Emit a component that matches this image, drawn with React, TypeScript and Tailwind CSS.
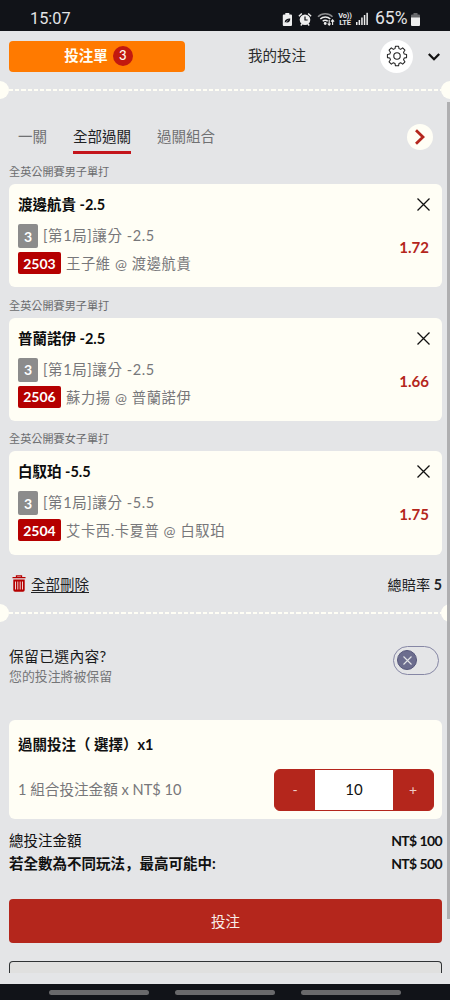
import { ReactNode } from "react";

const bets = [
  {
    league: "全英公開賽男子單打",
    pick: "渡邊航貴 -2.5",
    market: "[第1局]讓分 -2.5",
    code: "2503",
    match: "王子維 @ 渡邊航貴",
    odds: "1.72",
  },
  {
    league: "全英公開賽男子單打",
    pick: "普蘭諾伊 -2.5",
    market: "[第1局]讓分 -2.5",
    code: "2506",
    match: "蘇力揚 @ 普蘭諾伊",
    odds: "1.66",
  },
  {
    league: "全英公開賽女子單打",
    pick: "白馭珀 -5.5",
    market: "[第1局]讓分 -5.5",
    code: "2504",
    match: "艾卡西.卡夏普 @ 白馭珀",
    odds: "1.75",
  },
];

function StatusBar() {
  return (
    <div className="flex h-[31px] shrink-0 items-center bg-[#111318] pt-[7px] pl-[30px] font-['Roboto',sans-serif] text-[#e4e5e7]">
      <span className="w-[252px] text-[16.3px] leading-none">15:07</span>
      <svg width="11" height="15" viewBox="0 0 11 15">
        <path d="M3.3 1h4v1.5H9a1 1 0 0 1 1 1V13a1 1 0 0 1-1 1H1.8a1 1 0 0 1-1-1V3.500a1 1 0 0 1 1-1h1.500z" fill="#eee" />
        <path d="M2.800 10.500C2.800 7.500 5 6.500 8.300 6.500 8.200 9.500 6.500 11 4 10.200z" fill="#111318" />
        <path d="M2.500 11.500 6.300 8" stroke="#eee" strokeWidth=".5" />
      </svg>
      <svg className="ml-[5px]" width="14" height="15" viewBox="0 0 14 15">
        <circle cx="7" cy="7.800" r="5.300" fill="#eee" />
        <path d="M.9 4.200 3.800 1.500M13.100 4.200 10.200 1.500M2.800 13.500l1.300-1.600M11.200 13.500l-1.300-1.600" stroke="#eee" strokeWidth="1.500" />
        <path d="M7 4.500V8h2.600" fill="none" stroke="#111318" strokeWidth="1.200" />
      </svg>
      <svg className="ml-[5px]" width="18" height="14" viewBox="0 0 18 14" fill="none">
        <path d="M1 4.700C5 .7 11.500.7 15.500 4.700" stroke="#8b8c8e" strokeWidth="1.500" />
        <path d="M3.300 7c2.800-2.800 7.200-2.800 10 0M5.700 9.300c1.600-1.500 3.600-1.500 5 0" stroke="#eee" strokeWidth="1.500" />
        <circle cx="8.200" cy="11.500" r="1.400" fill="#eee" />
        <path d="M12.200 8v5M10.700 11.500l1.500 1.700 1.500-1.700M15.600 13V8M14.100 9.600l1.500-1.700 1.500 1.700" stroke="#eee" strokeWidth="1.100" />
      </svg>
      <span className="ml-[3px] flex w-[14px] flex-col items-center text-[7.5px] leading-[7px] font-bold tracking-[-0.2px]">
        <span>Vo))</span>
        <span>LTE</span>
      </span>
      <svg className="ml-[4px]" width="13" height="14" viewBox="0 0 13 14" fill="#eee">
        <rect x="0" y="10" width="1.500" height="3" />
        <rect x="2.600" y="8" width="1.500" height="5" />
        <rect x="5.200" y="5.500" width="1.500" height="7.500" />
        <rect x="7.800" y="3" width="1.500" height="10" />
        <rect x="10.400" y=".8" width="1.500" height="12.200" />
      </svg>
      <span className="ml-[6px] w-[36px] text-[17.500px] leading-none whitespace-nowrap">65%</span>
      <svg width="9" height="13" viewBox="0 0 9 13">
        <path d="M2.500 0h4v1.500H8a1 1 0 0 1 1 1V6H0V2.500a1 1 0 0 1 1-1h1.500z" fill="#68696c" />
        <path d="M0 4.500h9V12a1 1 0 0 1-1 1H1a1 1 0 0 1-1-1z" fill="#eee" />
      </svg>
    </div>
  );
}

function Header() {
  return (
    <div className="flex h-[50px] shrink-0 items-center pl-[9px]">
      <button className="flex h-[31px] w-[176px] items-center justify-center gap-[5px] rounded-[4px] bg-[#ff7a00] pl-[3px] text-[14.5px] font-bold text-[#fffdf3]">
        投注單
        <span className="flex size-[20px] items-center justify-center rounded-full bg-[#c2190f] text-[13px] font-medium">3</span>
      </button>
      <span className="w-[184px] text-center text-[14.5px] text-[#2a2b2c]">我的投注</span>
      <button className="ml-[11px] flex size-[33px] items-center justify-center rounded-full bg-white">
        <svg width="22" height="22" viewBox="0 0 24 24" fill="none" stroke="#222" strokeWidth="1.200" strokeLinejoin="round">
          <path d="M10.200 2h3.600l.5 2.700 1.900.8 2.300-1.600 2.600 2.600-1.600 2.300.8 1.900 2.700.5v3.600l-2.700.5-.8 1.900 1.600 2.300-2.600 2.600-2.300-1.600-1.900.8-.5 2.700h-3.600l-.5-2.700-1.900-.8-2.300 1.600-2.600-2.600 1.600-2.300-.8-1.900L1 14.800v-3.600l2.700-.5.8-1.900-1.600-2.300 2.600-2.600 2.300 1.600 1.900-.8z" transform="translate(.6 -.6) scale(.95 .97)" />
          <circle cx="12" cy="12" r="3.500" />
        </svg>
      </button>
      <svg className="mt-[2px] ml-[15px]" width="12" height="8" viewBox="0 0 12 8" fill="none" stroke="#111" strokeWidth="2.300">
        <path d="M.8 1 6 6.200 11.200 1" />
      </svg>
    </div>
  );
}

// ticket perforation between sections
function Perforation() {
  return (
    <div className="-mx-[9px] flex h-[18px] shrink-0 items-center justify-between overflow-hidden">
      <div className="size-[18px] shrink-0 rounded-full bg-[#fffef5]" />
      <div className="h-[2px] flex-1 bg-[repeating-linear-gradient(90deg,#fffef5_0_4px,transparent_4px_6.25px)]" />
      <div className="size-[18px] shrink-0 rounded-full bg-[#fffef5]" />
    </div>
  );
}

function Tabs() {
  return (
    <div className="flex h-[34px] shrink-0 items-start pl-[18px] text-[14.5px] leading-[34px] text-[#707173]">
      <span className="w-[55px]">一關</span>
      <span className="h-[34px] border-b-[3px] border-[#c4141b] text-[#202124]">全部過關</span>
      <span className="ml-[26px] w-[250px]">過關組合</span>
      <button className="mt-[4px] flex size-[26px] shrink-0 items-center justify-center rounded-full bg-[#fffef5]">
        <svg width="10" height="16" viewBox="0 0 10 16" fill="none" stroke="#b4261c" strokeWidth="2.800">
          <path d="M1 1.200 8 8 1 14.800" />
        </svg>
      </button>
    </div>
  );
}

function BetCard({ bet }: { bet: (typeof bets)[number] }) {
  return (
    <div className="mb-[6.2px] flex shrink-0 flex-col">
      <div className="h-[24px] pl-[9px] text-[11.15px] leading-[24px] text-[#6b6c6e]">{bet.league}</div>
      <div className="mr-[8px] ml-[9px] flex h-[103.4px] rounded-[6px] bg-[#fffef5] pl-[9px]">
        <div className="flex-1 pt-[10px]">
          <div className="h-[22px] text-[14.5px] leading-[22px] font-bold text-[#0c0c0c]">{bet.pick}</div>
          <div className="mt-[8px] flex h-[24px] items-center">
            <span className="flex h-[24px] w-[20px] items-center justify-center rounded-[2px] bg-[#8c8c8c] text-[14px] font-bold text-white">3</span>
            <span className="ml-[5px] text-[14.5px] leading-[20px] tracking-[0.6px] text-[#77777a]">{bet.market}</span>
          </div>
          <div className="mt-[4px] flex h-[22px] items-center">
            <span className="flex h-[22px] w-[43px] items-center justify-center rounded-[2px] bg-[#b50000] text-[14px] font-bold text-white">{bet.code}</span>
            <span className="ml-[5px] pt-[2px] text-[14.3px] leading-[20px] tracking-[0.6px] text-[#77777a]">{bet.match}</span>
          </div>
        </div>
        <div className="flex flex-col items-end pt-[14px] pr-[12px]">
          <svg width="13" height="13" viewBox="0 0 13 13" stroke="#111" strokeWidth="1.300">
            <path d="M.5.5l12 12M12.500.5l-12 12" />
          </svg>
          <span className="mt-[26px] mr-[1px] text-[15px] leading-[20px] font-bold text-[#b4261c]">{bet.odds}</span>
        </div>
      </div>
    </div>
  );
}

function SummaryRow({ label, value, strong }: { label: ReactNode; value: string; strong?: boolean }) {
  return (
    <div className="flex h-[22.4px] shrink-0 items-center justify-between pr-[8px] pl-[9px] text-[14.5px] text-[#111]">
      <span className={strong ? "font-bold" : ""}>{label}</span>
      <span className="text-[14px] font-bold tracking-[-0.6px]">{value}</span>
    </div>
  );
}

export default function App() {
  return (
    <div className="relative flex h-[1000px] w-[450px] flex-col overflow-hidden bg-[#e4e5e7] font-['Lato','Noto_Sans_CJK_TC',sans-serif] whitespace-nowrap">
      <StatusBar />
      <Header />
      <Perforation />

      <div className="h-[21px] shrink-0" />
      <Tabs />
      <div className="h-[6px] shrink-0" />
      {bets.map((bet) => (
        <BetCard key={bet.code} bet={bet} />
      ))}

      <div className="mt-[12px] flex h-[24px] shrink-0 items-center pr-[8px] pl-[12px] text-[14.5px] text-[#202124]">
        <svg className="-mt-[2px]" width="14" height="17" viewBox="0 0 14 17">
          <path d="M.5 2.700h13M4.500 2.500V.8h5v1.700" fill="none" stroke="#b50000" strokeWidth="1.300" />
          <path d="M1.300 4.500h11.400V15a1.700 1.700 0 0 1-1.700 1.700H3A1.700 1.700 0 0 1 1.300 15z" fill="#b50000" />
          <path d="M3.500 6.500v8M5.800 6.500v8M8.200 6.500v8M10.500 6.500v8" stroke="#f3e9e9" strokeWidth=".9" />
        </svg>
        <span className="ml-[5px] flex-1 underline decoration-1 underline-offset-[2px]">全部刪除</span>
        <span className="text-[14.2px]">
          總賠率 <b>5</b>
        </span>
      </div>
      <div className="h-[7px] shrink-0" />
      <Perforation />

      <div className="mt-[22px] flex h-[43px] shrink-0 items-start justify-between pr-[11px] pl-[9px]">
        <div className="pt-[1px]">
          <div className="text-[14.8px] leading-[22px] tracking-[0.3px] text-[#1b1c1d]">保留已選內容?</div>
          <div className="text-[12.9px] leading-[19px] text-[#747577]">您的投注將被保留</div>
        </div>
        <div className="mt-[2px] flex h-[29px] w-[46px] items-center rounded-full border border-[#8687a5] pl-[3px]">
          <span className="flex size-[20px] items-center justify-center rounded-full border border-[#55567a] bg-[#6c6d8e]">
            <svg width="9" height="9" viewBox="0 0 9 9" stroke="#e4e5e7" strokeWidth="1.100">
              <path d="M.5.5l8 8M8.500.5l-8 8" />
            </svg>
          </span>
        </div>
      </div>

      <div className="mt-[33px] mr-[8px] ml-[9px] flex h-[99.500px] shrink-0 flex-col rounded-[6px] bg-[#fffef5] pt-[14px] pr-[8px] pl-[9px]">
        <div className="h-[22px] text-[14.5px] leading-[22px] font-bold text-[#111]">過關投注（ 選擇）x1</div>
        <div className="mt-[13px] flex h-[42px] items-center justify-between">
          <span className="pt-[1px] text-[14.6px] text-[#77777a]">1 組合投注金額 x NT$ 10</span>
          <div className="flex h-[42px] w-[160px] overflow-hidden rounded-[6px] border border-[#b4261c] bg-[#b4261c] text-[14px] text-[#eecdc8]">
            <button className="w-[40px]">-</button>
            <span className="flex flex-1 items-center justify-center bg-white text-[15px] text-[#111]">10</span>
            <button className="w-[40px]">+</button>
          </div>
        </div>
      </div>

      <div className="h-[10.500px] shrink-0" />
      <SummaryRow label="總投注金額" value="NT$ 100" />
      <SummaryRow
        label={
          <>
            若全數為不同玩法<span className="font-['Noto_Sans_CJK_SC',sans-serif]">，</span>最高可能中:
          </>
        }
        value="NT$ 500"
        strong
      />

      <button className="mt-[24.500px] mr-[8px] ml-[9px] h-[43.500px] shrink-0 rounded-[4px] bg-[#b4261c] pt-[2px] text-[14.5px] text-[#f8eeea]">投注</button>
      <div className="mt-[18px] mr-[8px] ml-[9px] h-[12px] shrink-0 rounded-t-[4px] border border-b-0 border-[#303335] bg-[#e0e0df]" />

      <div className="mt-auto flex h-[16px] shrink-0 items-center justify-center gap-[26px] bg-[#111318]">
        <div className="h-[5px] w-[100px] rounded-full bg-[#69696b]" />
        <div className="h-[5px] w-[100px] rounded-full bg-[#69696b]" />
        <div className="h-[5px] w-[100px] rounded-full bg-[#69696b]" />
      </div>

      {/* scrollbar thumb */}
      <div className="absolute top-[102px] right-0 h-[817px] w-[3px] bg-[#a9a9ab]/90" />
    </div>
  );
}
